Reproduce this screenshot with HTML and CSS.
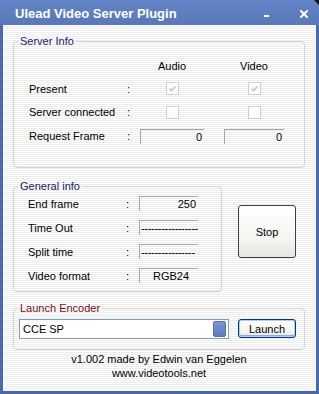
FILE: index.html
```html
<!DOCTYPE html>
<html lang="en">
<head>
    <meta charset="UTF-8">
    <title>Ulead Video Server Plugin</title>
    <link rel="stylesheet" href="styles.css">
</head>
<body>
    <div class="window">
        <div class="titlebar">
            <span class="title">Ulead Video Server Plugin</span>
            <span class="tb-min"></span>
            <svg class="tb-close" width="8" height="8" viewBox="0 0 8 8">
                <path d="M1 1 L7 7 M7 1 L1 7" stroke="#fff" stroke-width="2" stroke-linecap="square"/>
            </svg>
            <span class="corner"></span>
        </div>

        <div class="client">
            <fieldset class="group server">
                <legend>Server Info</legend>
                <div class="server-grid">
                    <span></span>
                    <span></span>
                    <span class="c1">Audio</span>
                    <span class="c2">Video</span>

                    <span class="label">Present</span>
                    <span class="colon">:</span>
                    <span class="c1"><span class="check"><svg width="11" height="11" viewBox="0 0 11 11"><path d="M2.5 5.5 L4.5 7.5 L8.5 3.5" fill="none" stroke="#bcc7d2" stroke-width="1.6"/></svg></span></span>
                    <span class="c2"><span class="check"><svg width="11" height="11" viewBox="0 0 11 11"><path d="M2.5 5.5 L4.5 7.5 L8.5 3.5" fill="none" stroke="#bcc7d2" stroke-width="1.6"/></svg></span></span>

                    <span class="label">Server connected</span>
                    <span class="colon">:</span>
                    <span class="c1"><span class="check"></span></span>
                    <span class="c2"><span class="check"></span></span>

                    <span class="label">Request Frame</span>
                    <span class="colon">:</span>
                    <span class="c1 field num">0</span>
                    <span class="c2 field num">0</span>
                </div>
            </fieldset>

            <div class="middle">
                <fieldset class="group general">
                    <legend>General info</legend>
                    <div class="general-grid">
                        <span class="label">End frame</span>
                        <span class="colon">:</span>
                        <span class="field num">250</span>

                        <span class="label">Time Out</span>
                        <span class="colon">:</span>
                        <span class="field dashes">-----------------</span>

                        <span class="label">Split time</span>
                        <span class="colon">:</span>
                        <span class="field dashes short">----------------</span>

                        <span class="label">Video format</span>
                        <span class="colon">:</span>
                        <span class="field center">RGB24</span>
                    </div>
                </fieldset>
                <button class="btn stop-btn">Stop</button>
            </div>

            <fieldset class="group launch">
                <legend>Launch Encoder</legend>
                <div class="launch-row">
                    <div class="combo">
                        <span class="combo-text">CCE SP</span>
                        <span class="combo-btn"></span>
                    </div>
                    <button class="btn launch-btn">Launch</button>
                </div>
            </fieldset>

            <div class="footer">
                <div>v1.002 made by Edwin van Eggelen</div>
                <div>www.videotools.net</div>
            </div>
        </div>
    </div>
</body>
</html>
```

FILE: styles.css
```css
body {
    margin: 0;
    font-family: "Liberation Sans", Arial, sans-serif;
    font-size: 11px;
    color: #000;
}

.window {
    width: 319px;
    height: 394px;
    display: flex;
    flex-direction: column;
    background: #4a69a9;
}

/* title bar */
.titlebar {
    height: 25px;
    flex-shrink: 0;
    position: relative;
    display: flex;
    align-items: center;
    padding-left: 15px;
    background: linear-gradient(#6384c6, #5878b8);
    color: #fff;
}

.title {
    font-size: 13px;
    font-weight: bold;
    padding-top: 2px;
}

.tb-min {
    width: 5px;
    height: 2px;
    background: #fff;
    margin-left: auto;
    margin-top: 6px;
}

.tb-close {
    margin-left: 31px;
    margin-right: 11px;
    margin-top: 2px;
}

.corner {
    position: absolute;
    top: 0;
    right: 0;
    width: 0;
    height: 0;
    border-top: 5px solid #111;
    border-left: 5px solid transparent;
}

/* client area */
.client {
    flex: 1;
    margin: 0 3px 3px;
    padding: 10px 11px 0 10px;
    background: repeating-linear-gradient(to bottom, #ffffff 0, #ffffff 1px, #ececec 1px, #ececec 2px);
}

.group {
    margin: 0;
    padding: 0;
    min-width: 0;
    border: 1px solid #d3d3d3;
    border-radius: 4px;
}

.group legend {
    margin-left: 4px;
    padding: 0 2px;
    line-height: 13px;
    color: #20206c;
}

.launch legend {
    color: #7a1010;
}

.label {
    white-space: nowrap;
}

.colon {
    padding-left: 1px;
}

/* server info */
.server-grid {
    display: grid;
    grid-template-columns: 97px 14px 64px 20px 60px;
    grid-template-rows: 22px 23px 24px 24px;
    align-items: center;
    padding: 7px 0 19px 15px;
}

.server-grid .c1 {
    justify-self: center;
}

.server-grid .c2 {
    grid-column: 5;
    justify-self: center;
}

.server-grid .field {
    justify-self: stretch;
}

.check {
    display: block;
    width: 11px;
    height: 11px;
    border: 1px solid #c6d0da;
    background: #fdfdfd;
}

.check svg {
    display: block;
}

.field {
    height: 15px;
    line-height: 15px;
    border-top: 1px solid #a6a6a6;
    border-left: 1px solid #a6a6a6;
    box-sizing: border-box;
    overflow: hidden;
    white-space: nowrap;
}

.num {
    text-align: right;
    padding-right: 2px;
}

.center {
    text-align: center;
    padding-left: 4px;
}

.dashes {
    padding-left: 1px;
    letter-spacing: -0.3px;
}

.dashes.short {
    padding-right: 3px;
}

/* general info + stop */
.middle {
    display: flex;
    align-items: flex-start;
    margin-top: 12px;
}

.general {
    width: 209px;
    box-sizing: border-box;
}

.general-grid {
    display: grid;
    grid-template-columns: 97px 14px 59px;
    grid-auto-rows: 15px;
    row-gap: 9px;
    align-items: center;
    padding: 3px 0 8px 14px;
}

.btn {
    font-family: "Liberation Sans", Arial, sans-serif;
    font-size: 11px;
    color: #000;
    padding: 0;
    border-radius: 3px;
    background: linear-gradient(#ffffff, #f3f3ef 70%, #e6e5df);
}

.stop-btn {
    width: 58px;
    height: 53px;
    margin: 25px 0 0 16px;
    border: 1px solid #29465c;
}

/* launch encoder */
.launch {
    margin-top: 10px;
}

.launch-row {
    display: flex;
    align-items: flex-start;
    padding: 4px 0 10px 5px;
}

.combo {
    width: 210px;
    height: 20px;
    box-sizing: border-box;
    border: 1px solid #7f9db9;
    background: #fff;
    display: flex;
    align-items: center;
    justify-content: space-between;
    padding: 0 2px 0 3px;
}

.combo-btn {
    width: 13px;
    height: 16px;
    box-sizing: border-box;
    border: 1px solid #5271b3;
    border-radius: 2px;
    background: linear-gradient(#7d98d4, #5c79bd);
}

.launch-btn {
    width: 58px;
    height: 19px;
    margin-left: 9px;
    border: 1px solid #003c74;
    box-shadow: inset 0 0 0 1px #b3cdf2, inset 0 -1px 0 1px #8aa9e6;
}

.footer {
    margin-top: 2px;
    text-align: center;
    line-height: 14px;
}
```
